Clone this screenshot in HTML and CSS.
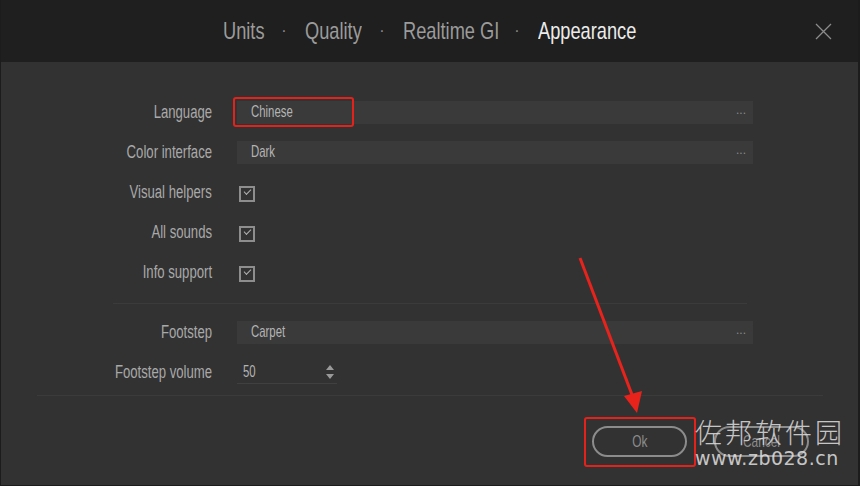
FILE: index.html
```html
<!DOCTYPE html>
<html lang="en">
<head>
    <meta charset="UTF-8">
    <meta name="viewport" content="width=device-width, initial-scale=1.0">
    <title>Settings - Appearance</title>
    <link rel="stylesheet" href="styles.css">
</head>
<body>
    <div class="dialog">
        <header class="tabs">
            <nav class="tab-list">
                <span class="tab w-units"><span class="txt">Units</span></span>
                <span class="dot">·</span>
                <span class="tab w-quality"><span class="txt">Quality</span></span>
                <span class="dot">·</span>
                <span class="tab w-gi"><span class="txt">Realtime GI</span></span>
                <span class="dot">·</span>
                <span class="tab w-appear active"><span class="txt">Appearance</span></span>
            </nav>
            <button class="close" aria-label="Close">
                <svg width="17" height="17" viewBox="0 0 17 17">
                    <path d="M1 1L16 16M16 1L1 16" stroke="#8c8c8c" stroke-width="1.3" fill="none"/>
                </svg>
            </button>
        </header>

        <main class="form">
            <div class="row">
                <label><span class="txt">Language</span></label>
                <div class="select"><span class="txt">Chinese</span><span class="more">...</span></div>
            </div>
            <div class="row">
                <label><span class="txt">Color interface</span></label>
                <div class="select"><span class="txt">Dark</span><span class="more">...</span></div>
            </div>
            <div class="row">
                <label><span class="txt">Visual helpers</span></label>
                <span class="check"></span>
            </div>
            <div class="row">
                <label><span class="txt">All sounds</span></label>
                <span class="check"></span>
            </div>
            <div class="row">
                <label><span class="txt">Info support</span></label>
                <span class="check"></span>
            </div>
            <hr class="sep">
            <div class="row">
                <label><span class="txt">Footstep</span></label>
                <div class="select"><span class="txt">Carpet</span><span class="more">...</span></div>
            </div>
            <div class="row">
                <label><span class="txt">Footstep volume</span></label>
                <div class="number">
                    <span class="txt">50</span>
                    <svg class="spin" width="10" height="16" viewBox="0 0 10 16">
                        <path d="M5 1L9 6H1Z M5 15L9 10H1Z" fill="#9a9a9a"/>
                    </svg>
                </div>
            </div>
        </main>

        <footer class="actions">
            <hr class="sep-wide">
            <div class="buttons">
                <button class="pill"><span class="txt">Ok</span></button>
                <button class="pill"><span class="txt">Cancel</span></button>
            </div>
        </footer>

        <!-- annotations drawn over the screenshot -->
        <div class="mark mark-lang"></div>
        <div class="mark mark-ok"></div>
        <svg class="arrow" width="860" height="486" viewBox="0 0 860 486">
            <path d="M580 258L634 400" stroke="#e8231c" stroke-width="3" fill="none"/>
            <path d="M624 396L637 413L642 391Z" fill="#e8231c"/>
        </svg>
        <div class="watermark">
            <div class="wm-cn">佐邦软件园</div>
            <div class="wm-url">www.zb028.cn</div>
        </div>
    </div>
</body>
</html>
```

FILE: styles.css
```css
body {
    margin: 0;
    background: #1c1c1c;
    font-family: 'Liberation Sans', sans-serif;
}
/* the UI font is a narrow one, so text is squeezed horizontally */
.txt {
    display: inline-block;
    white-space: nowrap;
    transform: scaleX(0.77);
    transform-origin: left center;
}
.dialog {
    position: relative;
    width: 857px;
    height: 485px;
    margin-left: 1px;
    background: #323232;
    overflow: hidden;
}
.tabs {
    height: 62px;
    background: #1f1f1f;
    display: flex;
    align-items: center;
    position: relative;
}
.tab-list {
    display: flex;
    align-items: center;
    margin-left: 222px;
}
.tab {
    font-size: 24px;
    color: #9b9b9b;
    white-space: nowrap;
}
.tab .txt {
    transform: scaleX(0.76);
}
.w-units { width: 40px; }
.w-quality { width: 56px; }
.w-gi { width: 93px; }
.w-appear { width: 97px; }
.tab.active {
    color: #ececec;
}
.dot {
    width: 42px;
    text-align: center;
    font-size: 16px;
    color: #8a8a8a;
}
.close {
    position: absolute;
    right: 26px;
    top: 23px;
    background: none;
    border: none;
    padding: 0;
    width: 17px;
    height: 17px;
}
.form {
    padding-top: 30px;
}
.row {
    display: grid;
    grid-template-columns: 211px 516px;
    column-gap: 25px;
    align-items: center;
    height: 40px;
}
.row label {
    text-align: right;
    font-size: 18px;
    color: #a9a9a9;
}
.row label .txt {
    transform-origin: right center;
    transform: scaleX(0.73);
}
.select {
    position: relative;
    height: 23px;
    line-height: 21px;
    background: #3a3a3a;
    padding-left: 14px;
    font-size: 17px;
    color: #b4b4b4;
}
.select .txt {
    transform: scaleX(0.67);
}
.more {
    position: absolute;
    right: 7px;
    top: -1px;
    font-size: 12px;
    color: #8a8a8a;
}
.check {
    width: 12px;
    height: 12px;
    margin: 3px 0 0 2px;
    border: 2px solid #8e8e8e;
    position: relative;
}
.check::after {
    content: '';
    position: absolute;
    left: 3px;
    top: 1px;
    width: 6px;
    height: 3px;
    border-left: 1px solid #b0b0b0;
    border-bottom: 1px solid #b0b0b0;
    transform: rotate(-45deg);
}
.number {
    width: 100px;
    height: 23px;
    border-bottom: 1px solid #404040;
    display: flex;
    align-items: center;
    justify-content: space-between;
    font-size: 17px;
    color: #b4b4b4;
}
.number .txt {
    margin-left: 6px;
    transform: scaleX(0.67);
}
.spin {
    margin-right: 2px;
}
.sep {
    border: none;
    border-top: 1px solid #3b3b3b;
    margin: 11px 0 8px 112px;
    width: 634px;
}
.sep-wide {
    border: none;
    border-top: 1px solid #3b3b3b;
    margin: 3px 0 0 36px;
    width: 786px;
}
.buttons {
    display: flex;
    gap: 27px;
    margin: 30px 0 0 591px;
}
.pill {
    width: 95px;
    height: 31px;
    border: 2px solid #8c8c8c;
    border-radius: 16px;
    background: transparent;
    font-family: inherit;
    font-size: 17px;
    color: #8c8c8c;
}
.pill .txt {
    transform-origin: center;
    transform: scaleX(0.7);
}
.mark {
    position: absolute;
    border: 2px solid #e3231b;
    border-radius: 3px;
}
.mark-lang {
    left: 232px;
    top: 97px;
    width: 117px;
    height: 26px;
}
.mark-ok {
    left: 583px;
    top: 417px;
    width: 108px;
    height: 46px;
}
.arrow {
    position: absolute;
    left: -1px;
    top: 0;
    pointer-events: none;
}
.watermark {
    position: absolute;
    left: 694px;
    top: 416px;
    color: rgba(225, 225, 225, 0.85);
}
.wm-cn {
    font-family: 'Noto Sans CJK SC', sans-serif;
    font-weight: 300;
    font-size: 27px;
    letter-spacing: 3px;
    line-height: 32px;
}
.wm-url {
    font-family: 'DejaVu Sans', sans-serif;
    font-size: 19px;
    line-height: 20px;
    letter-spacing: 0.5px;
}
```
